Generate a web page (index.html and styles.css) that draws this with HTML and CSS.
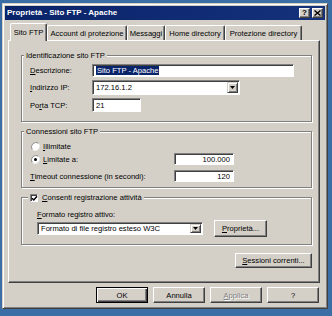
FILE: index.html
```html
<!DOCTYPE html>
<html lang="it">
<head>
<meta charset="utf-8">
<title>Proprietà - Sito FTP - Apache</title>
<link rel="stylesheet" href="styles.css">
</head>
<body>
<div class="window">
  <div class="titlebar">
    <span class="title">Proprietà - Sito FTP - Apache</span>
    <div class="capbtns">
      <span class="capbtn help">?</span>
      <span class="capbtn close"><svg width="7" height="6" viewBox="0 0 7 6"><path d="M0.5 0.5 L6.5 5.5 M6.5 0.5 L0.5 5.5" stroke="#000" stroke-width="1.4"/></svg></span>
    </div>
  </div>

  <div class="tabs">
    <div class="tab active t1">Sito FTP</div>
    <div class="tab t2">Account di protezione</div>
    <div class="tab t3">Messaggi</div>
    <div class="tab t4">Home directory</div>
    <div class="tab t5">Protezione directory</div>
  </div>

  <div class="pane">
    <div class="group g1">
      <div class="legend">Identificazione sito FTP</div>
      <div class="rows1">
        <div class="row r13">
          <span class="lbl"><u>D</u>escrizione:</span>
          <div class="field f-desc"><span class="sel">Sito FTP - Apache</span></div>
        </div>
        <div class="row r15">
          <span class="lbl"><u>I</u>ndirizzo IP:</span>
          <div class="field combo f-ip"><span class="val">172.16.1.2</span><span class="drop"><svg width="5" height="3" viewBox="0 0 5 3"><path d="M0 0 H5 L2.5 3 Z" fill="#000"/></svg></span></div>
        </div>
        <div class="row r14">
          <span class="lbl">Po<u>r</u>ta TCP:</span>
          <div class="field f-port"><span class="val">21</span></div>
        </div>
      </div>
    </div>

    <div class="group g2">
      <div class="legend">Connessioni sito FTP</div>
      <div class="rows2">
        <div class="row r12">
          <span class="radio"><svg width="9" height="9" viewBox="0 0 12 12"><circle cx="6" cy="6" r="5.2" fill="#fff"/><path d="M10.2 1.8 A6 6 0 0 0 1.8 10.2" fill="none" stroke="#808080" stroke-width="1.2"/><path d="M1.8 10.2 A6 6 0 0 0 10.2 1.8" fill="none" stroke="#f0f0f0" stroke-width="1.2"/></svg></span>
          <span class="rlbl"><u>I</u>llimitate</span>
        </div>
        <div class="row r12 gap1">
          <span class="lbl2"><span class="radio"><svg width="9" height="9" viewBox="0 0 12 12"><circle cx="6" cy="6" r="5.2" fill="#fff"/><path d="M10.2 1.8 A6 6 0 0 0 1.8 10.2" fill="none" stroke="#808080" stroke-width="1.2"/><path d="M1.8 10.2 A6 6 0 0 0 10.2 1.8" fill="none" stroke="#f0f0f0" stroke-width="1.2"/><circle cx="6" cy="6" r="2" fill="#000"/></svg></span><span class="rlbl"><u>L</u>imitate a:</span></span>
          <div class="field f-num"><span class="val">100.000</span></div>
        </div>
        <div class="row r12 gap5">
          <span class="lbl2"><u>T</u>imeout connessione (in secondi):</span>
          <div class="field f-num"><span class="val">120</span></div>
        </div>
      </div>
    </div>

    <div class="group g3">
      <div class="legend chk-legend">
        <span class="check"><svg width="7" height="7" viewBox="0 0 7 7"><path d="M1 3.2 L2.8 5 L6 1.2" fill="none" stroke="#000" stroke-width="1.4"/></svg></span>
        <span class="rlbl"><u>C</u>onsenti registrazione attività</span>
      </div>
      <div class="flbl"><u>F</u>ormato registro attivo:</div>
      <div class="row logrow">
        <div class="field combo f-fmt"><span class="val">Formato di file registro esteso W3C</span><span class="drop"><svg width="5" height="3" viewBox="0 0 5 3"><path d="M0 0 H5 L2.5 3 Z" fill="#000"/></svg></span></div>
        <button class="btn b-prop"><u>P</u>roprietà...</button>
      </div>
    </div>

    <button class="btn b-sess"><u>S</u>essioni correnti...</button>
  </div>

  <div class="buttons">
    <button class="btn default">OK</button>
    <button class="btn">Annulla</button>
    <button class="btn disabled"><u>A</u>pplica</button>
    <button class="btn">?</button>
  </div>
</div>
</body>
</html>
```

FILE: styles.css
```css
* { box-sizing: border-box; }

body {
  margin: 0;
  width: 332px;
  height: 316px;
  overflow: hidden;
  background: #3a6ea5;
  font-family: "Liberation Sans", Arial, sans-serif;
  font-size: 7.6px;
  color: #000;
}

.window {
  margin: 3px 0 0 2px;
  width: 326px;
  height: 306px;
  background: #d4d0c8;
  border: 1px solid;
  border-color: #d4d0c8 #404040 #404040 #d4d0c8;
  box-shadow: inset 1px 1px #fff, inset -1px -1px #808080;
  padding: 2px 2px 0 2px;
  display: flex;
  flex-direction: column;
}

/* title bar */
.titlebar {
  height: 14px;
  display: flex;
  align-items: center;
  padding: 0 2px;
  background: linear-gradient(90deg, #0a246a, #14317a);
  color: #fff;
  font-weight: bold;
  font-size: 8px;
}
.title { line-height: 14px; }
.capbtns { margin-left: auto; display: flex; gap: 2px; }
.capbtn {
  width: 11px;
  height: 10px;
  background: #d4d0c8;
  border: 1px solid;
  border-color: #fff #404040 #404040 #fff;
  box-shadow: inset -1px -1px #808080;
  color: #000;
  display: flex;
  align-items: center;
  justify-content: center;
  font-size: 8px;
  line-height: 8px;
}

/* tabs */
.tabs {
  display: flex;
  align-items: flex-end;
  height: 17px;
  margin: 3px 0 0 5px;
}
.tab {
  height: 15px;
  display: flex;
  align-items: center;
  justify-content: center;
  border: 1px solid;
  border-bottom: none;
  border-color: #fff #404040 #404040 #fff;
  border-radius: 2px 2px 0 0;
  box-shadow: inset -1px 0 #808080;
  background: #d4d0c8;
  padding-top: 1px;
}
.tab.active {
  height: 18px;
  margin-bottom: -1px;
  position: relative;
  z-index: 1;
  padding-top: 0;
  padding-bottom: 1px;
}
.t1 { width: 37px; }
.t2 { width: 80px; }
.t3 { width: 38px; }
.t4 { width: 60px; }
.t5 { width: 77px; }

/* pane */
.pane {
  margin-left: 3px;
  width: 312px;
  height: 243px;
  border: 1px solid;
  border-color: #fff #404040 #404040 #fff;
  box-shadow: inset -1px -1px #808080;
  padding: 14px 7px 0 12px;
  display: flex;
  flex-direction: column;
}

.group {
  border: 1px solid #808080;
  box-shadow: 1px 1px 0 #fff, inset 1px 1px 0 #fff;
  display: flex;
  flex-direction: column;
}
.legend {
  align-self: flex-start;
  height: 9px;
  line-height: 9px;
  margin: -5px 0 0 -6px;
  padding: 0 2px;
  background: #d4d0c8;
  white-space: nowrap;
}

.g1 { padding: 0 8px 9px 8px; }
.rows1 { display: flex; flex-direction: column; gap: 3px; margin-top: 4px; }
.row { display: flex; align-items: center; }
.r13 { height: 13px; }
.r14 { height: 14px; }
.r15 { height: 15px; }
.r12 { height: 12px; }
.lbl { width: 62px; white-space: nowrap; }

.field {
  height: 100%;
  background: #fff;
  border: 1px solid;
  border-color: #808080 #fff #fff #808080;
  box-shadow: inset 1px 1px #404040;
  display: flex;
  align-items: center;
  padding-left: 3px;
  white-space: nowrap;
  overflow: hidden;
}
.f-desc { width: 202px; }
.f-ip { width: 148px; }
.f-port { width: 49px; }
.sel { background: #0a246a; color: #fff; line-height: 9px; padding: 0 1px; }
.combo { position: relative; padding-right: 12px; }
.combo .val { flex: 1; }
.drop {
  width: 11px;
  height: calc(100% - 2px);
  margin-right: -11px;
  background: #d4d0c8;
  border: 1px solid;
  border-color: #d4d0c8 #404040 #404040 #d4d0c8;
  box-shadow: inset 1px 1px #fff, inset -1px -1px #808080;
  display: flex;
  align-items: center;
  justify-content: center;
}

.g2 { margin-top: 9px; padding: 0 8px 5px 8px; }
.rows2 { display: flex; flex-direction: column; margin-top: 4px; }
.gap1 { margin-top: 1px; }
.gap5 { margin-top: 5px; }
.radio { width: 9px; height: 9px; display: inline-flex; margin-left: 1px; margin-right: 3px; }
.rlbl { white-space: nowrap; }
.lbl2 { width: 144px; display: flex; align-items: center; white-space: nowrap; }
.f-num { width: 60px; justify-content: flex-end; padding-right: 3px; }

.g3 { margin-top: 9px; padding: 0 8px 7px 15px; }
.chk-legend { display: flex; align-items: center; margin-left: -9px; }
.check {
  width: 8px;
  height: 8px;
  background: #fff;
  border: 1px solid;
  border-color: #808080 #fff #fff #808080;
  box-shadow: inset 1px 1px #404040;
  display: inline-flex;
  align-items: center;
  justify-content: center;
  margin-right: 4px;
}
.check svg { margin: 0 -1px -1px 0; }
.flbl { height: 9px; line-height: 9px; margin-top: 8px; white-space: nowrap; }
.logrow { height: 17px; margin-top: 1px; gap: 11px; }
.f-fmt { width: 166px; height: 13px; }

.btn {
  font: inherit;
  color: #000;
  background: #d4d0c8;
  border: 1px solid;
  border-color: #fff #404040 #404040 #fff;
  box-shadow: inset -1px -1px #808080;
  padding: 0;
  margin: 0;
  height: 16px;
  display: flex;
  align-items: center;
  justify-content: center;
  white-space: nowrap;
}
.b-prop { width: 53px; height: 17px; }
.b-sess { width: 77px; height: 15px; align-self: flex-end; margin-top: 8px; }

.buttons {
  display: flex;
  justify-content: flex-end;
  gap: 5px;
  margin-top: 4px;
  padding-right: 6px;
}
.buttons .btn { width: 52px; }
.btn.default {
  border: 1px solid #000;
  box-shadow: inset 1px 1px #fff, inset -1px -1px #404040, inset -2px -2px #808080;
}
.btn.disabled { color: #808080; text-shadow: 1px 1px 0 #fff; }
```
